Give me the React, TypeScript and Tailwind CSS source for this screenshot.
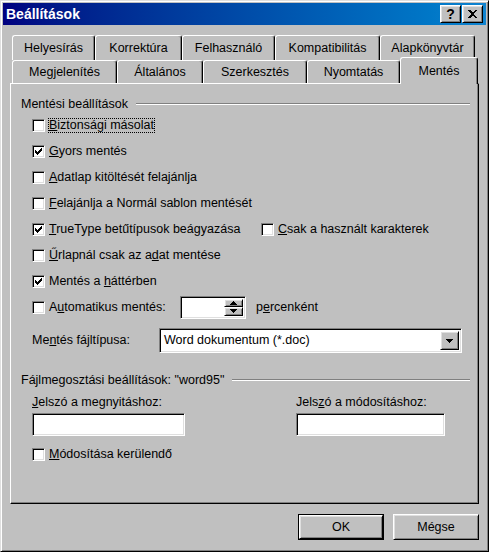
import React from "react";

const raised =
  "border border-t-white border-l-white border-r-black border-b-black bg-[#c0c0c0] shadow-[inset_1px_1px_0_#dfdfdf,inset_-1px_-1px_0_#808080]";
const sunken =
  "border border-t-[#808080] border-l-[#808080] border-r-white border-b-white bg-white shadow-[inset_1px_1px_0_#000,inset_-1px_-1px_0_#dfdfdf]";

function Check() {
  return (
    <svg width="7" height="7" viewBox="0 0 7 7" shapeRendering="crispEdges">
      <rect x="6" y="0" width="1" height="1" />
      <rect x="5" y="1" width="2" height="1" />
      <rect x="0" y="2" width="1" height="1" />
      <rect x="4" y="2" width="3" height="1" />
      <rect x="0" y="3" width="2" height="1" />
      <rect x="3" y="3" width="3" height="1" />
      <rect x="0" y="4" width="5" height="1" />
      <rect x="1" y="5" width="3" height="1" />
      <rect x="2" y="6" width="1" height="1" />
    </svg>
  );
}

function Checkbox({ checked, focused, children }: { checked?: boolean; focused?: boolean; children: React.ReactNode }) {
  return (
    <div className="flex items-center">
      <div className={`${sunken} flex h-[13px] w-[13px] shrink-0 items-center justify-center`}>
        {checked && <Check />}
      </div>
      <span
        className={`ml-[3px] border px-0 leading-[13px] ${focused ? "border-dotted border-black" : "border-transparent"}`}
      >
        {children}
      </span>
    </div>
  );
}

function Tab({ label, w, top, selected }: { label: string; w: number; top?: boolean; selected?: boolean }) {
  const h = selected ? "h-[27px] pt-[5px] relative z-10" : top ? "h-[25px] pt-[4px]" : "h-[23px] pt-[3px]";
  return (
    <div
      style={{ width: w }}
      className={`${h} flex shrink-0 justify-center rounded-tl-[3px] rounded-tr-[3px] border-t border-l border-r border-t-white border-l-white border-r-black bg-[#c0c0c0] leading-[16px] shadow-[inset_-1px_0_0_#808080]`}
    >
      {label}
    </div>
  );
}

function GroupHeader({ children, mt }: { children: React.ReactNode; mt: string }) {
  return (
    <div className={`${mt} flex h-[16px] items-center pl-[10px] pr-[8px]`}>
      <span className="whitespace-nowrap">{children}</span>
      <div className="ml-[8px] h-[2px] flex-1 border-t border-b border-t-[#808080] border-b-white" />
    </div>
  );
}

function Row({ children }: { children: React.ReactNode }) {
  return <div className="flex h-[26px] items-center">{children}</div>;
}

function Arrow({ up }: { up?: boolean }) {
  return (
    <svg width="7" height="4" viewBox="0 0 7 4" shapeRendering="crispEdges">
      {up ? <path d="M3 0h1v1h1v1h1v1h1v1H0V3h1V2h1V1h1z" /> : <path d="M0 0h7v1H6v1H5v1H4v1H3V3H2V2H1V1H0z" />}
    </svg>
  );
}

export default function App() {
  return (
    <div className="h-[552px] w-[489px] border border-t-[#dfdfdf] border-l-[#dfdfdf] border-r-black border-b-black bg-[#c0c0c0] p-[2px] font-['Liberation_Sans',Arial,sans-serif] text-[12.5px] text-black shadow-[inset_1px_1px_0_#fff,inset_-1px_-1px_0_#808080]">
      {/* title bar */}
      <div className="flex h-[22px] items-center justify-between bg-linear-to-r from-[#000080] to-[#1084d0] pl-[3px] pr-[3px]">
        <span className="text-[14px] font-bold text-white">Beállítások</span>
        <div className="flex gap-[1px]">
          <div className={`${raised} flex h-[18px] w-[21px] items-center justify-center text-[14px] leading-none font-bold`}>?</div>
          <div className={`${raised} flex h-[18px] w-[21px] items-center justify-center`}>
            <svg width="9" height="8" viewBox="0 0 9 8" shapeRendering="crispEdges">
              <path d="M0 0h2l2.5 2.5L7 0h2L5.5 4 9 8H7L4.5 5.5 2 8H0l3.5-4z" />
            </svg>
          </div>
        </div>
      </div>

      <div className="flex flex-col px-[7px] pt-[10px]">
        {/* tabs */}
        <div className="flex pl-[2px]">
          <Tab top label="Helyesírás" w={83} />
          <Tab top label="Korrektúra" w={87} />
          <Tab top label="Felhasználó" w={93} />
          <Tab top label="Kompatibilitás" w={105} />
          <Tab top label="Alapkönyvtár" w={95} />
        </div>
        <div className="relative z-10 -mt-[3px] -mb-px flex h-[27px] items-start pl-[2px]">
          <div className="mt-[3px] flex">
            <Tab label="Megjelenítés" w={105} />
            <Tab label="Általános" w={86} />
            <Tab label="Szerkesztés" w={104} />
            <Tab label="Nyomtatás" w={93} />
          </div>
          <Tab selected label="Mentés" w={78} />
        </div>

        {/* panel */}
        <div className="flex h-[421px] w-[469px] flex-col border border-t-white border-l-white border-r-black border-b-black shadow-[inset_-1px_-1px_0_#808080]">
          <GroupHeader mt="mt-[12px]">Mentési beállítások</GroupHeader>
          <div className="flex flex-col pl-[21px]">
            <Row>
              <Checkbox focused>
                <u className="underline">B</u>iztonsági másolat
              </Checkbox>
            </Row>
            <Row>
              <Checkbox checked>
                <u className="underline">G</u>yors mentés
              </Checkbox>
            </Row>
            <Row>
              <Checkbox>
                <u className="underline">A</u>datlap kitöltését felajánlja
              </Checkbox>
            </Row>
            <Row>
              <Checkbox>
                <u className="underline">F</u>elajánlja a Normál sablon mentését
              </Checkbox>
            </Row>
            <Row>
              <div className="w-[229px]">
                <Checkbox checked>
                  <u className="underline">T</u>rueType betűtípusok beágyazása
                </Checkbox>
              </div>
              <Checkbox>
                <u className="underline">C</u>sak a használt karakterek
              </Checkbox>
            </Row>
            <Row>
              <Checkbox>
                <u className="underline">Ű</u>rlapnál csak az a<u className="underline">d</u>at mentése
              </Checkbox>
            </Row>
            <Row>
              <Checkbox checked>
                Mentés a <u className="underline">h</u>áttérben
              </Checkbox>
            </Row>
            <Row>
              <div className="w-[148px]">
                <Checkbox>
                  A<u className="underline">u</u>tomatikus mentés:
                </Checkbox>
              </div>
              <div className={`${sunken} flex h-[23px] w-[66px] items-stretch justify-end p-[2px]`}>
                <div className="flex w-[19px] flex-col">
                  <div className={`${raised} flex flex-1 items-center justify-center`}>
                    <Arrow up />
                  </div>
                  <div className={`${raised} flex flex-1 items-center justify-center`}>
                    <Arrow />
                  </div>
                </div>
              </div>
              <span className="ml-[10px]">
                p<u className="underline">e</u>rcenként
              </span>
            </Row>
            <div className="mt-[8px] flex h-[25px] items-center">
              <span className="w-[127px]">
                Me<u className="underline">n</u>tés fájltípusa:
              </span>
              <div className={`${sunken} flex h-[25px] w-[303px] items-center p-[2px]`}>
                <span className="flex-1 pl-[2px]">Word dokumentum (*.doc)</span>
                <div className={`${raised} flex h-full w-[19px] items-center justify-center`}>
                  <Arrow />
                </div>
              </div>
            </div>
          </div>

          <GroupHeader mt="mt-[19px]">Fájlmegosztási beállítások: "word95"</GroupHeader>
          <div className="flex flex-col pl-[21px]">
            <div className="mt-[6px] flex h-[16px] items-center">
              <span className="w-[264px]">
                <u className="underline">J</u>elszó a megnyitáshoz:
              </span>
              <span>
                Jels<u className="underline">z</u>ó a módosításhoz:
              </span>
            </div>
            <div className="mt-[3px] flex">
              <div className="w-[264px]">
                <div className={`${sunken} h-[23px] w-[153px]`} />
              </div>
              <div className={`${sunken} h-[23px] w-[149px]`} />
            </div>
            <div className="mt-[5px]">
              <Row>
                <Checkbox>
                  <u className="underline">M</u>ódosítása kerülendő
                </Checkbox>
              </Row>
            </div>
          </div>
        </div>

        {/* buttons */}
        <div className="mt-[10px] flex justify-end gap-[9px]">
          <div className="h-[26px] w-[86px] border border-black">
            <div className={`${raised} flex h-full w-full items-center justify-center`}>OK</div>
          </div>
          <div className={`${raised} flex h-[26px] w-[86px] items-center justify-center`}>Mégse</div>
        </div>
      </div>
    </div>
  );
}
